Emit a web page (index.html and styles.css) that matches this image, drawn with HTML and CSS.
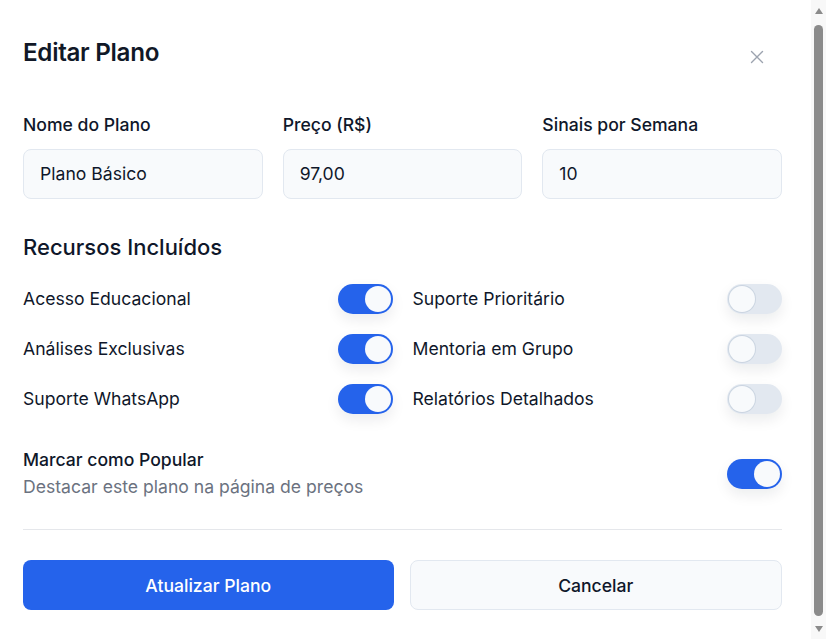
FILE: index.html
```html
<!DOCTYPE html>
<html lang="pt-BR">
<head>
<meta charset="utf-8">
<title>Editar Plano</title>
<link rel="stylesheet" href="styles.css">
</head>
<body>
<div class="dialog">
  <header class="dialog-header">
    <h2 class="dialog-title">Editar Plano</h2>
    <button class="close" type="button" aria-label="Fechar">
      <svg width="14" height="14" viewBox="0 0 14 14"><path d="M1.5 1.5 L12.5 12.5 M12.5 1.5 L1.5 12.5" stroke="#9ca3af" stroke-width="1.4" stroke-linecap="round" fill="none"/></svg>
    </button>
  </header>

  <div class="fields">
    <label class="field">
      <span class="field-label">Nome do Plano</span>
      <input class="input" type="text" value="Plano Básico" readonly>
    </label>
    <label class="field">
      <span class="field-label">Preço (R$)</span>
      <input class="input" type="text" value="97,00" readonly>
    </label>
    <label class="field">
      <span class="field-label">Sinais por Semana</span>
      <input class="input" type="text" value="10" readonly>
    </label>
  </div>

  <h3 class="section-title">Recursos Incluídos</h3>

  <div class="features">
    <div class="feature"><span>Acesso Educacional</span><span class="switch on"><span class="knob"></span></span></div>
    <div class="feature"><span>Suporte Prioritário</span><span class="switch"><span class="knob"></span></span></div>
    <div class="feature"><span>Análises Exclusivas</span><span class="switch on"><span class="knob"></span></span></div>
    <div class="feature"><span>Mentoria em Grupo</span><span class="switch"><span class="knob"></span></span></div>
    <div class="feature"><span>Suporte WhatsApp</span><span class="switch on"><span class="knob"></span></span></div>
    <div class="feature"><span>Relatórios Detalhados</span><span class="switch"><span class="knob"></span></span></div>
  </div>

  <div class="popular">
    <div>
      <div class="popular-title">Marcar como Popular</div>
      <div class="popular-desc">Destacar este plano na página de preços</div>
    </div>
    <span class="switch on"><span class="knob"></span></span>
  </div>

  <hr class="divider">

  <div class="actions">
    <button class="btn btn-primary" type="button">Atualizar Plano</button>
    <button class="btn btn-secondary" type="button">Cancelar</button>
  </div>
</div>

<div class="scrollbar" aria-hidden="true">
  <span class="arrow arrow-up"></span>
  <span class="thumb"></span>
  <span class="arrow arrow-down"></span>
</div>
</body>
</html>
```

FILE: styles.css
```css
* { box-sizing: border-box; }

html, body {
  margin: 0;
  padding: 0;
  background: #ffffff;
}

body {
  font-family: Inter, "Noto Sans", "Liberation Sans", sans-serif;
  color: #0f172a;
  font-size: 17.6px;
  line-height: 26.4px;
}

.dialog {
  width: 759px;
  margin-left: 23px;
  padding-top: 35px;
  padding-bottom: 20px;
}

.dialog-header {
  display: flex;
  justify-content: space-between;
  align-items: center;
}

.dialog-title {
  margin: 0;
  font-size: 24.2px;
  line-height: 35.2px;
  font-weight: 600;
  letter-spacing: -0.3px;
  color: #111827;
}

.close {
  border: 0;
  background: transparent;
  padding: 0;
  width: 14px;
  height: 14px;
  margin-right: 18px;
  margin-top: 9px;
  display: flex;
}

.fields {
  display: grid;
  grid-template-columns: repeat(3, minmax(0, 1fr));
  column-gap: 20px;
  margin-top: 42px;
}

.field {
  display: flex;
  flex-direction: column;
  gap: 10px;
  min-width: 0;
}

.field-label {
  font-weight: 500;
  color: #0f172a;
}

.input {
  width: 100%;
  min-width: 0;
  height: 50px;
  border: 1px solid #e2e8f0;
  border-radius: 8px;
  background: #f8fafc;
  padding: 0 16px;
  font-family: inherit;
  font-size: 17.6px;
  color: #0f172a;
  outline: none;
}

.section-title {
  margin: 33px 0 0;
  font-size: 22px;
  line-height: 30.8px;
  font-weight: 500;
  color: #0f172a;
}

.features {
  display: grid;
  grid-template-columns: minmax(0, 1fr) minmax(0, 1fr);
  column-gap: 20px;
  row-gap: 20px;
  margin-top: 22px;
}

.feature {
  display: flex;
  justify-content: space-between;
  align-items: center;
  height: 30px;
}

.switch {
  position: relative;
  width: 55px;
  height: 30px;
  border-radius: 15px;
  background: #e2e8f0;
  box-shadow: 0 6px 14px rgba(15, 23, 42, 0.08);
  flex: none;
}

.switch .knob {
  position: absolute;
  top: 2px;
  left: 2px;
  width: 26px;
  height: 26px;
  border-radius: 50%;
  background: #f8fafc;
  box-shadow: 0 0 0 1px #cbd5e1;
}

.switch.on {
  background: #2563eb;
}

.switch.on .knob {
  left: 27px;
  box-shadow: none;
}

.popular {
  display: flex;
  justify-content: space-between;
  align-items: center;
  margin-top: 33px;
}

.popular-title {
  font-weight: 500;
}

.popular-desc {
  color: #6b7280;
}

.divider {
  border: 0;
  border-top: 1px solid #e5e7eb;
  margin: 29px 0 0;
}

.actions {
  display: flex;
  gap: 16px;
  margin-top: 30px;
}

.btn {
  flex: 1;
  height: 50px;
  border-radius: 8px;
  font-family: inherit;
  font-size: 17.6px;
  font-weight: 500;
  cursor: pointer;
}

.btn-primary {
  background: #2563eb;
  color: #ffffff;
  border: 0;
}

.btn-secondary {
  background: #f8fafc;
  color: #0f172a;
  border: 1px solid #e2e8f0;
}

/* classic scrollbar drawn over the right edge */
.scrollbar {
  position: fixed;
  top: 0;
  right: 0;
  width: 15px;
  height: 100vh;
  background: #f8f8f8;
  display: flex;
  flex-direction: column;
  align-items: center;
  padding: 8px 0 7px;
}

.arrow {
  width: 0;
  height: 0;
  border-left: 4.5px solid transparent;
  border-right: 4.5px solid transparent;
  flex: none;
}

.arrow-up {
  border-bottom: 6px solid #8b8b8b;
}

.arrow-down {
  border-top: 6px solid #8b8b8b;
}

.thumb {
  flex: 1;
  width: 9px;
  margin: 11px 0 10px;
  border-radius: 5px;
  background: #8b8b8b;
}
```
